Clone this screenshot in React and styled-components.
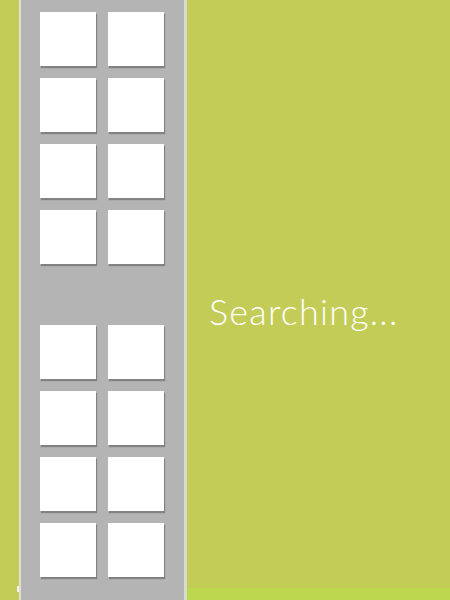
import React from 'react';
import styled, { createGlobalStyle } from 'styled-components';

const GlobalStyle = createGlobalStyle`
  html, body {
    margin: 0;
    padding: 0;
    background: #c4cc58;
  }
`

const Screen = styled.div`
  display: flex;
  width: 450px;
  height: 600px;
  overflow: hidden;
  background: #c4cc58;
  font-family: Lato, "Open Sans", sans-serif;
`

const Gutter = styled.div`
  position: relative;
  width: 19px;
  flex-shrink: 0;
`

const Nub = styled.div`
  position: absolute;
  right: 0;
  bottom: 8px;
  width: 2px;
  height: 6px;
  background: #f4f6e0;
`

const Shelf = styled.div`
  width: 168px;
  flex-shrink: 0;
  box-sizing: border-box;
  background: #b4b4b4;
  border-left: 2px solid #dedfd6;
  border-right: 3px solid #d9dad3;
  padding: 12px 0 0 19px;
  display: flex;
  flex-direction: column;
  gap: 61px;
`

const Group = styled.div`
  display: grid;
  grid-template-columns: 56px 56px;
  grid-auto-rows: 54px;
  column-gap: 12px;
  row-gap: 12px;
`

const Tile = styled.div`
  background: #ffffff;
  box-shadow: 1px 2px 1px rgba(0, 0, 0, 0.28);
`

const Stage = styled.div`
  flex: 1;
  display: flex;
  flex-direction: column;
`

const Center = styled.div`
  flex: 1;
  display: flex;
  align-items: center;
  padding: 34px 0 0 22px;
`

const Status = styled.div`
  color: #ffffff;
  font-size: 36px;
  font-weight: 300;
  letter-spacing: 1.2px;
`

const Foot = styled.div`
  height: 12px;
  background: #bdd84f;
`

function App() {
  const tiles = [0, 1, 2, 3, 4, 5, 6, 7];
  return (
    <>
      <GlobalStyle />
      <Screen>
        <Gutter><Nub /></Gutter>
        <Shelf>
          <Group>
            {tiles.map(i => <Tile key={i} />)}
          </Group>
          <Group>
            {tiles.map(i => <Tile key={i} />)}
          </Group>
        </Shelf>
        <Stage>
          <Center>
            <Status>Searching...</Status>
          </Center>
          <Foot />
        </Stage>
      </Screen>
    </>
  );
}

export default App;
